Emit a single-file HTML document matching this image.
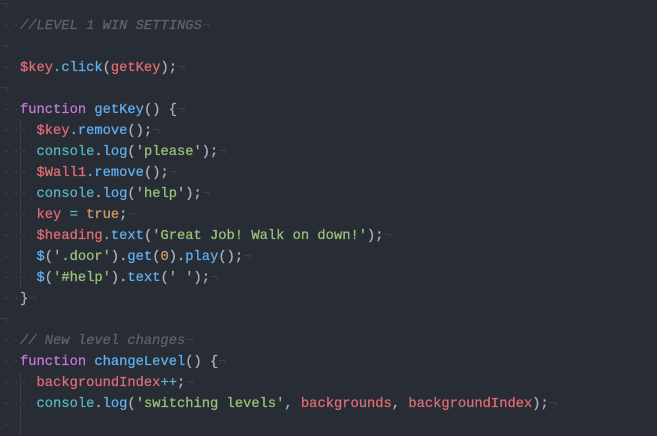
<!DOCTYPE html>
<html><head><style>
html,body{margin:0;padding:0;background:#282c34;width:657px;height:430px;overflow:hidden}
.c{position:absolute;left:0;top:-5px;font-family:"Liberation Mono",monospace;font-size:13.77px;line-height:21px;color:#abb2bf;-webkit-text-stroke:0.25px}
.l{position:relative;height:21px;padding-left:20px;white-space:pre}
.g::before{content:"· ·";position:absolute;left:3px;top:0;color:#4b5263;font-size:10px;letter-spacing:-1px;-webkit-text-stroke:0}
.i::after{content:"";position:absolute;left:20px;top:0;width:1px;height:21px;background:#3b4048}
.w{color:#3b4048;-webkit-text-stroke:0}
.r{color:#e06c75}.b{color:#61afef}.p{color:#c678dd}.s{color:#98c379}.y{color:#56b6c2}.o{color:#d19a66}
.cm{color:#5c6370;font-style:italic}
</style></head><body><div class="c"><div class="l" style="padding-left:0"><span class="w">¬</span></div><div class="l g"><span class="cm">//LEVEL 1 WIN SETTINGS</span><span class="w">¬</span></div><div class="l" style="padding-left:0"><span class="w">¬</span></div><div class="l g"><span class="r">$key</span><span class="y">.</span><span class="b">click</span>(<span class="r">getKey</span>);<span class="w">¬</span></div><div class="l" style="padding-left:0"><span class="w">¬</span></div><div class="l g"><span class="p">function</span> <span class="b">getKey</span>() {<span class="w">¬</span></div><div class="l g i"><span class="w">·</span> <span class="r">$key</span><span class="y">.</span><span class="b">remove</span>();<span class="w">¬</span></div><div class="l g i"><span class="w">·</span> <span class="y">console</span>.<span class="b">log</span>(<span class="s">'please'</span>);<span class="w">¬</span></div><div class="l g i"><span class="w">·</span> <span class="r">$Wall1</span><span class="y">.</span><span class="b">remove</span>();<span class="w">¬</span></div><div class="l g i"><span class="w">·</span> <span class="y">console</span>.<span class="b">log</span>(<span class="s">'help'</span>);<span class="w">¬</span></div><div class="l g i"><span class="w">·</span> <span class="r">key</span> <span class="y">=</span> <span class="o">true</span>;<span class="w">¬</span></div><div class="l g i"><span class="w">·</span> <span class="r">$heading</span><span class="y">.</span><span class="b">text</span>(<span class="s">'Great Job! Walk on down!'</span>);<span class="w">¬</span></div><div class="l g i"><span class="w">·</span> <span class="b">$</span>(<span class="s">'.door'</span>).<span class="b">get</span>(<span class="o">0</span>).<span class="b">play</span>();<span class="w">¬</span></div><div class="l g i"><span class="w">·</span> <span class="b">$</span>(<span class="s">'#help'</span>).<span class="b">text</span>(<span class="s">' '</span>);<span class="w">¬</span></div><div class="l g">}<span class="w">¬</span></div><div class="l" style="padding-left:0"><span class="w">¬</span></div><div class="l g"><span class="cm">// New level changes</span><span class="w">¬</span></div><div class="l g"><span class="p">function</span> <span class="b">changeLevel</span>() {<span class="w">¬</span></div><div class="l g i"><span class="w">·</span> <span class="r">backgroundIndex</span><span class="y">++</span>;<span class="w">¬</span></div><div class="l g i"><span class="w">·</span> <span class="y">console</span>.<span class="b">log</span>(<span class="s">'switching levels'</span>, <span class="r">backgrounds</span>, <span class="r">backgroundIndex</span>);<span class="w">¬</span></div><div class="l g i"></div></div></body></html>
